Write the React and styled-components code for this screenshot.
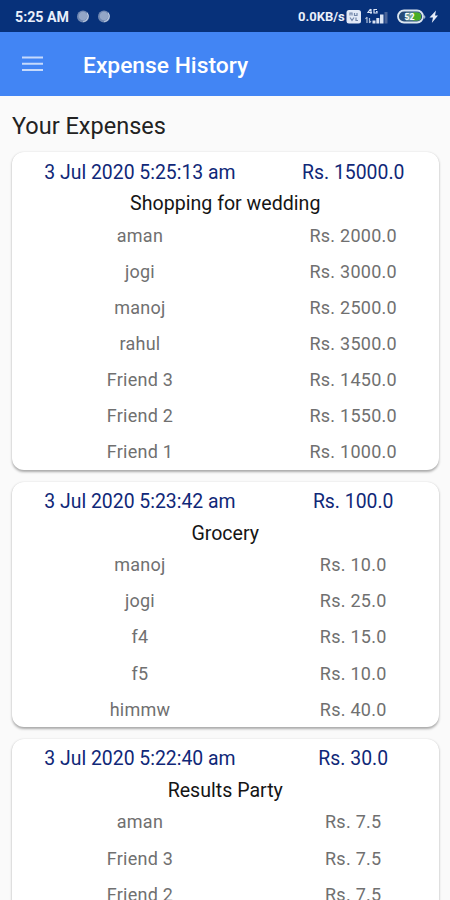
import React from "react";
import styled, { createGlobalStyle } from "styled-components";

const GlobalStyle = createGlobalStyle`
  * { box-sizing: border-box; }
  body { margin: 0; background: #fafafa; overflow: hidden; }
`;

const Screen = styled.div`
  height: 900px;
  overflow: hidden;
  background: #fafafa;
  font-family: Roboto, sans-serif;
  white-space: nowrap;
`;

const StatusBar = styled.div`
  height: 32px;
  padding: 1px 10px 0 15px;
  display: flex;
  align-items: center;
  justify-content: space-between;
  background: #07317a;
  color: #e9effb;
`;

const StatusGroup = styled.div`
  display: flex;
  align-items: center;
`;

const Clock = styled.span`
  width: 61px;
  font-size: 14.2px;
  font-weight: 700;
`;

const Speed = styled.span`
  width: 48px;
  font-size: 13px;
  font-weight: 700;
`;

const AppBar = styled.header`
  height: 64px;
  padding: 2px 22px 0;
  display: flex;
  align-items: center;
  gap: 40px;
  background: #4285f4;
  color: #fff;
`;

const MenuButton = styled.button`
  display: flex;
  padding: 0 0 2px;
  border: 0;
  background: none;
`;

const AppTitle = styled.h1`
  margin: 0;
  font-size: 22.8px;
  font-weight: 500;
`;

const Content = styled.main`
  padding: 0 11.5px 0 12px;
`;

const Heading = styled.h2`
  height: 56px;
  margin: 0;
  padding-top: 3px;
  display: flex;
  align-items: center;
  font-size: 23.5px;
  font-weight: 400;
  color: #222;
`;

const CardList = styled.div`
  display: flex;
  flex-direction: column;
  gap: 11.6px;
`;

const Card = styled.section`
  padding-top: 4px;
  border-radius: 12px;
  background: #fff;
  box-shadow: 0 1.5px 2.5px rgba(0, 0, 0, 0.32), 0 0 1px rgba(0, 0, 0, 0.06);
`;

const Row = styled.div`
  height: ${({ $summary }) => ($summary ? 32 : 36.15)}px;
  display: grid;
  grid-template-columns: 3fr 2fr;
  align-items: center;
  text-align: center;
  font-size: ${({ $summary }) => ($summary ? 19.4 : 18)}px;
  letter-spacing: ${({ $summary }) => ($summary ? 0 : 0.25)}px;
  color: ${({ $summary }) => ($summary ? "#102878" : "#707070")};
`;

const CardTitle = styled.h3`
  height: 29px;
  margin: 0;
  padding-top: 2.5px;
  display: flex;
  align-items: center;
  justify-content: center;
  font-size: 19.6px;
  font-weight: 400;
  color: #151515;
`;

const expenses = [
  { date: "3 Jul 2020 5:25:13 am", total: "15000.0", title: "Shopping for wedding",
    shares: [["aman", "2000.0"], ["jogi", "3000.0"], ["manoj", "2500.0"], ["rahul", "3500.0"], ["Friend 3", "1450.0"], ["Friend 2", "1550.0"], ["Friend 1", "1000.0"]] },
  { date: "3 Jul 2020 5:23:42 am", total: "100.0", title: "Grocery",
    shares: [["manoj", "10.0"], ["jogi", "25.0"], ["f4", "15.0"], ["f5", "10.0"], ["himmw", "40.0"]] },
  { date: "3 Jul 2020 5:22:40 am", total: "30.0", title: "Results Party",
    shares: [["aman", "7.5"], ["Friend 3", "7.5"], ["Friend 2", "7.5"]] },
];

const NotificationDots = () => (
  <svg width="36" height="14" viewBox="0 0 36 14">
    {[7, 28].map((x) => (
      <g key={x}>
        <circle cx={x} cy="6.5" r="6" fill="#7088b2" />
        <circle cx={x} cy="6" r="4.3" fill="#93a6c7" />
        <path d={`M${x + 4.2} 3a5.6 5.6 0 0 1-4 8.6`} fill="none" stroke="#bccae0" strokeWidth="1.2" />
      </g>
    ))}
  </svg>
);

const StatusIcons = () => (
  <svg width="94" height="20" viewBox="0 0 94 20">
    <rect x="0.5" y="3" width="14.5" height="13.5" rx="2.5" fill="#e2e9f7" />
    <path d="M4 8.5V6h2v2.5M8.5 6v2.5H11V6M4 10.5l2 3 2-3m2 0v3h2" fill="none" stroke="#7487aa" strokeWidth="1.2" />
    <path d="M24.5 2 22 5.5h4M25 2v5M31 2.5h-3v3.5h3V4.5h-1" fill="none" stroke="#d9e3f5" strokeWidth="1.2" />
    <path d="M21 10v6m-1.5-4 1.5-2M23.5 16v-5m0 5 1.5-2" fill="none" stroke="#abbcd9" strokeWidth="1.2" />
    <path d="M26.5 16.5v-3h3v3zM30.3 16.5V11h3v5.500zM34 16.5V7.500h3.500v9z" fill="#dbe4f4" />
    <path d="M38.5 16.5V5h3v11.5z" fill="#4a6498" />
    <rect x="52" y="3.5" width="25" height="12" rx="6" fill="#254b78" stroke="#dbe6f0" strokeWidth="1.8" />
    <path d="M60 5.5h11a4 4 0 0 1 0 8H60z" fill="#739f9b" />
    <path d="M67 5.5h4a4 4 0 0 1 0 8h-4z" fill="#48ad24" />
    <path d="M78.300 8q2 2 0 4z" fill="#e0e9f5" />
    <text x="63.5" y="12.8" textAnchor="middle" fontSize="9" fontWeight="700" fill="#fff">52</text>
    <path d="m90 3.5-6.500 7h3.500l-1.200 5.500 6.200-7.500h-3z" fill="#e5ecf9" />
  </svg>
);

const MenuIcon = () => (
  <svg width="21" height="16" viewBox="0 0 21 16">
    <path d="M0 1.6h21M0 7.8h21M0 14h21" stroke="#c6dafc" strokeWidth="2" />
  </svg>
);

export default function App() {
  return (
    <Screen>
      <GlobalStyle />
      <StatusBar>
        <StatusGroup><Clock>5:25 AM</Clock><NotificationDots /></StatusGroup>
        <StatusGroup><Speed>0.0KB/s</Speed><StatusIcons /></StatusGroup>
      </StatusBar>
      <AppBar>
        <MenuButton aria-label="Menu"><MenuIcon /></MenuButton>
        <AppTitle>Expense History</AppTitle>
      </AppBar>
      <Content>
        <Heading>Your Expenses</Heading>
        <CardList>
          {expenses.map((expense) => (
            <Card key={expense.date}>
              <Row $summary><span>{expense.date}</span><span>Rs. {expense.total}</span></Row>
              <CardTitle>{expense.title}</CardTitle>
              {expense.shares.map(([name, amount]) => (
                <Row key={name}><span>{name}</span><span>Rs. {amount}</span></Row>
              ))}
            </Card>
          ))}
        </CardList>
      </Content>
    </Screen>
  );
}
